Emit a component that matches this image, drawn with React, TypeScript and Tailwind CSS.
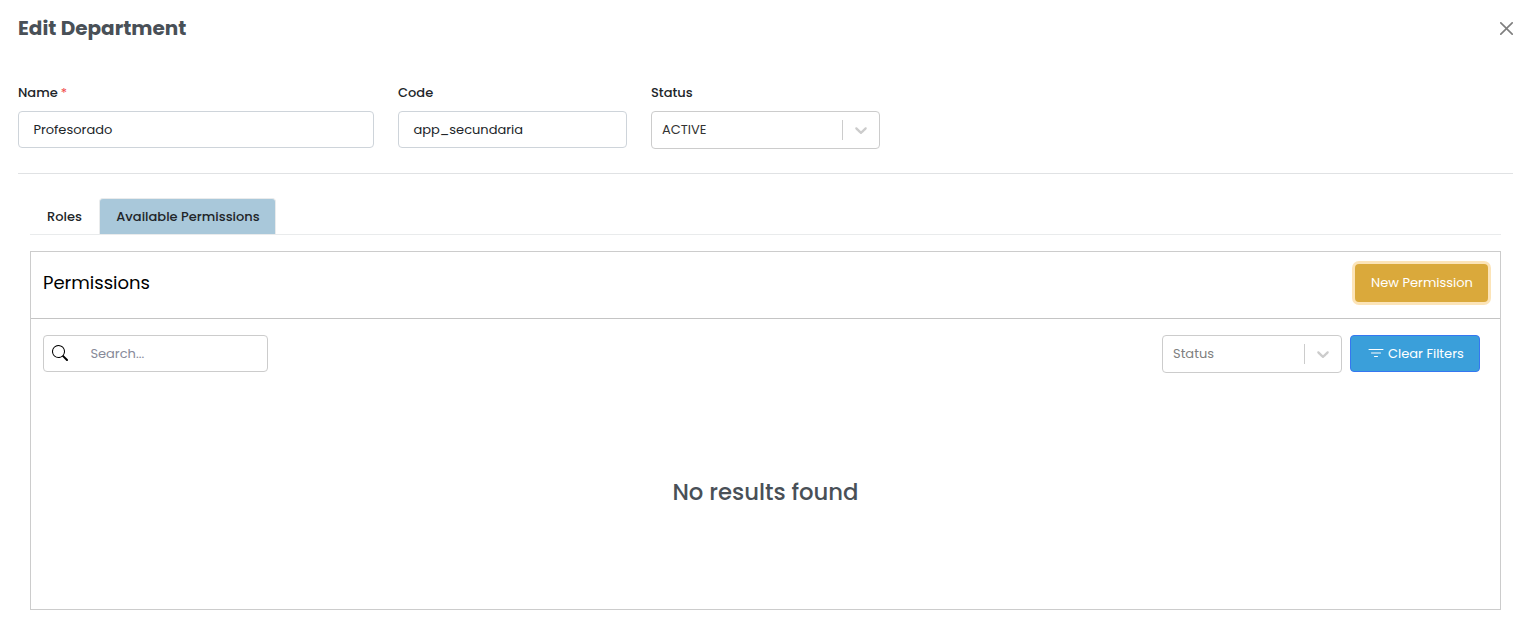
import { useState } from "react";
import type { ReactNode } from "react";
import { BsSearch } from "react-icons/bs";
import { IoFilterOutline } from "react-icons/io5";

function CloseIcon() {
  return (
    <svg viewBox="0 0 16 16" className="size-[13px]" fill="#000" opacity={0.5}>
      <path d="M.293.293a1 1 0 0 1 1.414 0L8 6.586 14.293.293a1 1 0 1 1 1.414 1.414L9.414 8l6.293 6.293a1 1 0 0 1-1.414 1.414L8 9.414l-6.293 6.293a1 1 0 0 1-1.414-1.414L6.586 8 .293 1.707a1 1 0 0 1 0-1.414z" />
    </svg>
  );
}

function SelectBox({ children, className }: { children: ReactNode; className: string }) {
  return (
    <div className={`flex h-[38px] items-stretch rounded-[4px] border border-[#cccccc] bg-white ${className}`}>
      <div className="flex flex-1 items-center pb-px pl-[10px]">{children}</div>
      <div className="my-2 w-px bg-[#cccccc]" />
      <div className="flex w-9 items-center justify-center">
        <svg viewBox="0 0 20 20" className="size-5" fill="#cccccc">
          <path d="M4.516 7.548c0.436-0.446 1.043-0.481 1.576 0l3.908 3.747 3.908-3.747c0.533-0.481 1.141-0.446 1.574 0 0.436 0.445 0.408 1.197 0 1.615-0.406 0.418-4.695 4.502-4.695 4.502-0.217 0.223-0.502 0.335-0.787 0.335s-0.57-0.112-0.789-0.335c0 0-4.287-4.084-4.695-4.502s-0.436-1.17 0-1.615z" />
        </svg>
      </div>
    </div>
  );
}

function Field({ label, required, children }: { label: string; required?: boolean; children: ReactNode }) {
  return (
    <div>
      <div className="mb-2 h-5 text-[13px] leading-5 font-medium text-[#212529]">
        {label}
        {required && <span className="ml-[3px] font-normal text-[#f04848]">*</span>}
      </div>
      {children}
    </div>
  );
}

export default function App() {
  const [name, setName] = useState("Profesorado");
  const [code, setCode] = useState("app_secundaria");

  return (
    <div className="h-[640px] w-[1528px] overflow-hidden bg-white font-['Poppins','Inter',sans-serif] text-[13px] text-[#212529]">
      <header className="flex h-[56px] items-center justify-between pr-[15px] pl-[18px]">
        <h5 className="text-[20px] font-bold text-[#495057]">Edit Department</h5>
        <button aria-label="Close" className="mt-px">
          <CloseIcon />
        </button>
      </header>

      <section className="mr-[15px] ml-[18px] flex h-[118px] gap-6 border-b border-[#e0e2e4] pt-[27px]">
        <Field label="Name" required>
          <input
            value={name}
            onChange={(e) => setName(e.target.value)}
            className="block h-[37px] w-[356px] rounded-[4px] border border-[#ced4da] px-[14.4px] outline-none"
          />
        </Field>
        <Field label="Code">
          <input
            value={code}
            onChange={(e) => setCode(e.target.value)}
            className="block h-[37px] w-[229px] rounded-[4px] border border-[#ced4da] px-[14.4px] outline-none"
          />
        </Field>
        <Field label="Status">
          <SelectBox className="w-[229px]">
            <span className="text-[#333333]">ACTIVE</span>
          </SelectBox>
        </Field>
      </section>

      <main className="mr-[27px] ml-[30px] pt-6">
        <nav className="flex h-[37px] border-b border-[#e9ebec] font-medium">
          <button className="w-[69px] pt-px text-[#212529]">Roles</button>
          <button className="w-[177px] rounded-t-[4px] border border-b-0 border-[#e9ebec] bg-[#a9c8da] pl-px text-[#212529]">
            Available Permissions
          </button>
        </nav>

        <div className="mt-4 h-[359px] border border-[#cccccc]">
          <div className="flex h-[67px] items-center justify-between border-b border-[#c4c4c4] pr-3 pb-1 pl-3">
            <h4 className="pb-0.5 text-[18px] text-black">Permissions</h4>
            <button className="h-[38px] w-[133px] rounded-[4px] bg-[#daa93b] pl-px text-white shadow-[0_0_0_3px_#fce4b8]">
              New Permission
            </button>
          </div>

          <div className="flex items-start justify-between pt-4 pr-5 pl-3">
            <div className="flex h-[37px] w-[225px] items-center rounded-[4px] border border-[#cccccc] pl-2">
              <BsSearch className="mb-px size-4 text-black" />
              <input
                placeholder="Search..."
                className="ml-[22.4px] w-[150px] bg-transparent outline-none placeholder:text-[#878a99]"
              />
            </div>
            <div className="flex gap-2">
              <SelectBox className="w-[180px]">
                <span className="text-[#808080]">Status</span>
              </SelectBox>
              <button className="flex h-[37px] w-[130px] items-center rounded-[4px] border border-[#3577f1] bg-[#3a9fda] pl-[17px] text-white">
                <IoFilterOutline className="mr-1 mb-px size-4" />
                Clear Filters
              </button>
            </div>
          </div>

          <p className="mt-[102px] text-center text-[22.75px] leading-[34px] font-medium text-[#495057]">
            No results found
          </p>
        </div>
      </main>
    </div>
  );
}
